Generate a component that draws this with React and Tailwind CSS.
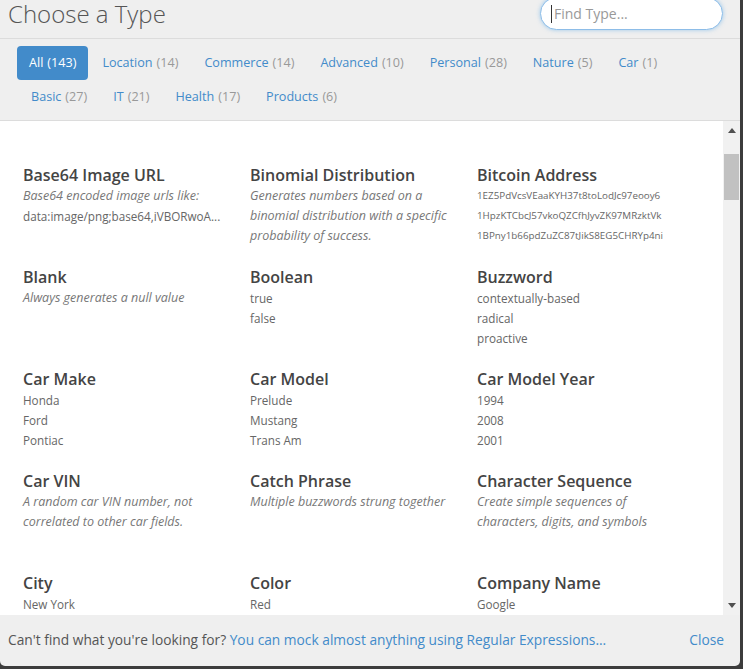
import React from 'react';

const tabsRow1 = [
  { name: 'All', count: 143, active: true },
  { name: 'Location', count: 14 },
  { name: 'Commerce', count: 14 },
  { name: 'Advanced', count: 10 },
  { name: 'Personal', count: 28 },
  { name: 'Nature', count: 5 },
  { name: 'Car', count: 1 },
];

const tabsRow2 = [
  { name: 'Basic', count: 27 },
  { name: 'IT', count: 21 },
  { name: 'Health', count: 17 },
  { name: 'Products', count: 6 },
];

const types = [
  { title: 'Base64 Image URL', desc: ['Base64 encoded image urls like:'], samples: ['data:image/png;base64,iVBORwoA...'] },
  { title: 'Binomial Distribution', desc: ['Generates numbers based on a', 'binomial distribution with a specific', 'probability of success.'] },
  { title: 'Bitcoin Address', small: true, samples: ['1EZ5PdVcsVEaaKYH37t8toLodJc97eooy6', '1HpzKTCbcJ57vkoQZCfhJyvZK97MRzktVk', '1BPny1b66pdZuZC87tJikS8EG5CHRYp4ni'] },
  { title: 'Blank', desc: ['Always generates a null value'] },
  { title: 'Boolean', samples: ['true', 'false'] },
  { title: 'Buzzword', samples: ['contextually-based', 'radical', 'proactive'] },
  { title: 'Car Make', samples: ['Honda', 'Ford', 'Pontiac'] },
  { title: 'Car Model', samples: ['Prelude', 'Mustang', 'Trans Am'] },
  { title: 'Car Model Year', samples: ['1994', '2008', '2001'] },
  { title: 'Car VIN', desc: ['A random car VIN number, not', 'correlated to other car fields.'] },
  { title: 'Catch Phrase', desc: ['Multiple buzzwords strung together'] },
  { title: 'Character Sequence', desc: ['Create simple sequences of', 'characters, digits, and symbols'] },
  { title: 'City', samples: ['New York'] },
  { title: 'Color', samples: ['Red'] },
  { title: 'Company Name', samples: ['Google'] },
];

const Tab = ({ tab, first }) => (
  <div
    className={`h-[34px] px-3 flex items-center rounded-[4px] text-[12.6px] ${first ? '' : 'ml-[2px]'} ${
      tab.active ? 'bg-[#428bca] text-white' : 'text-[#428bca]'
    }`}
  >
    {tab.name}
    <span className={`ml-1 ${tab.active ? 'text-white' : 'text-[#999]'}`}>({tab.count})</span>
  </div>
);

const TypeCard = ({ t }) => (
  <div className="h-[102px] w-[227px]">
    <div className="text-[16px] leading-[21px] font-semibold text-[#444]">{t.title}</div>
    {t.desc &&
      t.desc.map((line) => (
        <div key={line} className="text-[12.5px] leading-[20px] italic text-[#777]">
          {line}
        </div>
      ))}
    {t.samples &&
      t.samples.map((s) => (
        <div key={s} className={`${t.small ? 'text-[9.8px]' : 'text-[11.7px]'} leading-[20px] text-[#666]`}>
          {s}
        </div>
      ))}
  </div>
);

export default function App() {
  return (
    <div className="w-[743px] h-[669px] bg-[#3c3c3c] overflow-hidden" style={{ fontFamily: '"Open Sans", sans-serif' }}>
      <div className="w-[740px] h-[666px] bg-[#efefef] rounded-b-[5px] flex flex-col overflow-hidden">
        {/* header */}
        <div className="h-[39px] border-b border-[#dcdcdc] flex justify-between items-start pl-2 pr-[17px] shrink-0">
          <h1 className="text-[24px] leading-[28px] font-light text-[#555]">Choose a Type</h1>
          <div className="-mt-[3px] w-[183px] h-[33px] rounded-full bg-white border border-[#8dbde8] shadow-[0_0_4px_rgba(102,175,233,0.6)] flex items-center pl-[10px] text-[14px] text-[#999]">
            <span className="w-px h-[18px] bg-[#333] mr-[2px]" />
            Find Type...
          </div>
        </div>

        {/* tabs */}
        <div className="h-[82px] border-b border-[#dcdcdc] pt-[7px] pl-[17px] shrink-0">
          <div className="flex">
            {tabsRow1.map((t, i) => (
              <Tab key={t.name} tab={t} first={i === 0} />
            ))}
          </div>
          <div className="flex">
            {tabsRow2.map((t) => (
              <Tab key={t.name} tab={t} />
            ))}
          </div>
        </div>

        {/* list */}
        <div className="h-[494px] bg-white flex shrink-0">
          <div className="flex-1 overflow-hidden pl-[23px] pt-[44px]">
            <div className="grid grid-cols-[227px_227px_227px]">
              {types.map((t) => (
                <TypeCard key={t.title} t={t} />
              ))}
            </div>
          </div>
          <div className="w-[17px] bg-[#f1f1f1] flex flex-col items-center">
            <div className="h-[17px] flex items-center justify-center mt-[1px]">
              <svg width="8" height="5" viewBox="0 0 8 5"><path d="M0 5 L4 0 L8 5 Z" fill="#505050" /></svg>
            </div>
            <div className="mt-[15px] w-[15px] h-[46px] bg-[#c1c1c1]" />
            <div className="flex-1" />
            <div className="h-[17px] flex items-center justify-center mb-[1px]">
              <svg width="8" height="5" viewBox="0 0 8 5"><path d="M0 0 L8 0 L4 5 Z" fill="#505050" /></svg>
            </div>
          </div>
        </div>

        {/* footer */}
        <div className="flex-1 flex items-center justify-between pl-2 pr-4 text-[13.75px]">
          <div className="text-[#555]">
            Can't find what you're looking for?{' '}
            <span className="text-[#428bca]">You can mock almost anything using Regular Expressions...</span>
          </div>
          <span className="text-[#428bca]">Close</span>
        </div>
      </div>
    </div>
  );
}
